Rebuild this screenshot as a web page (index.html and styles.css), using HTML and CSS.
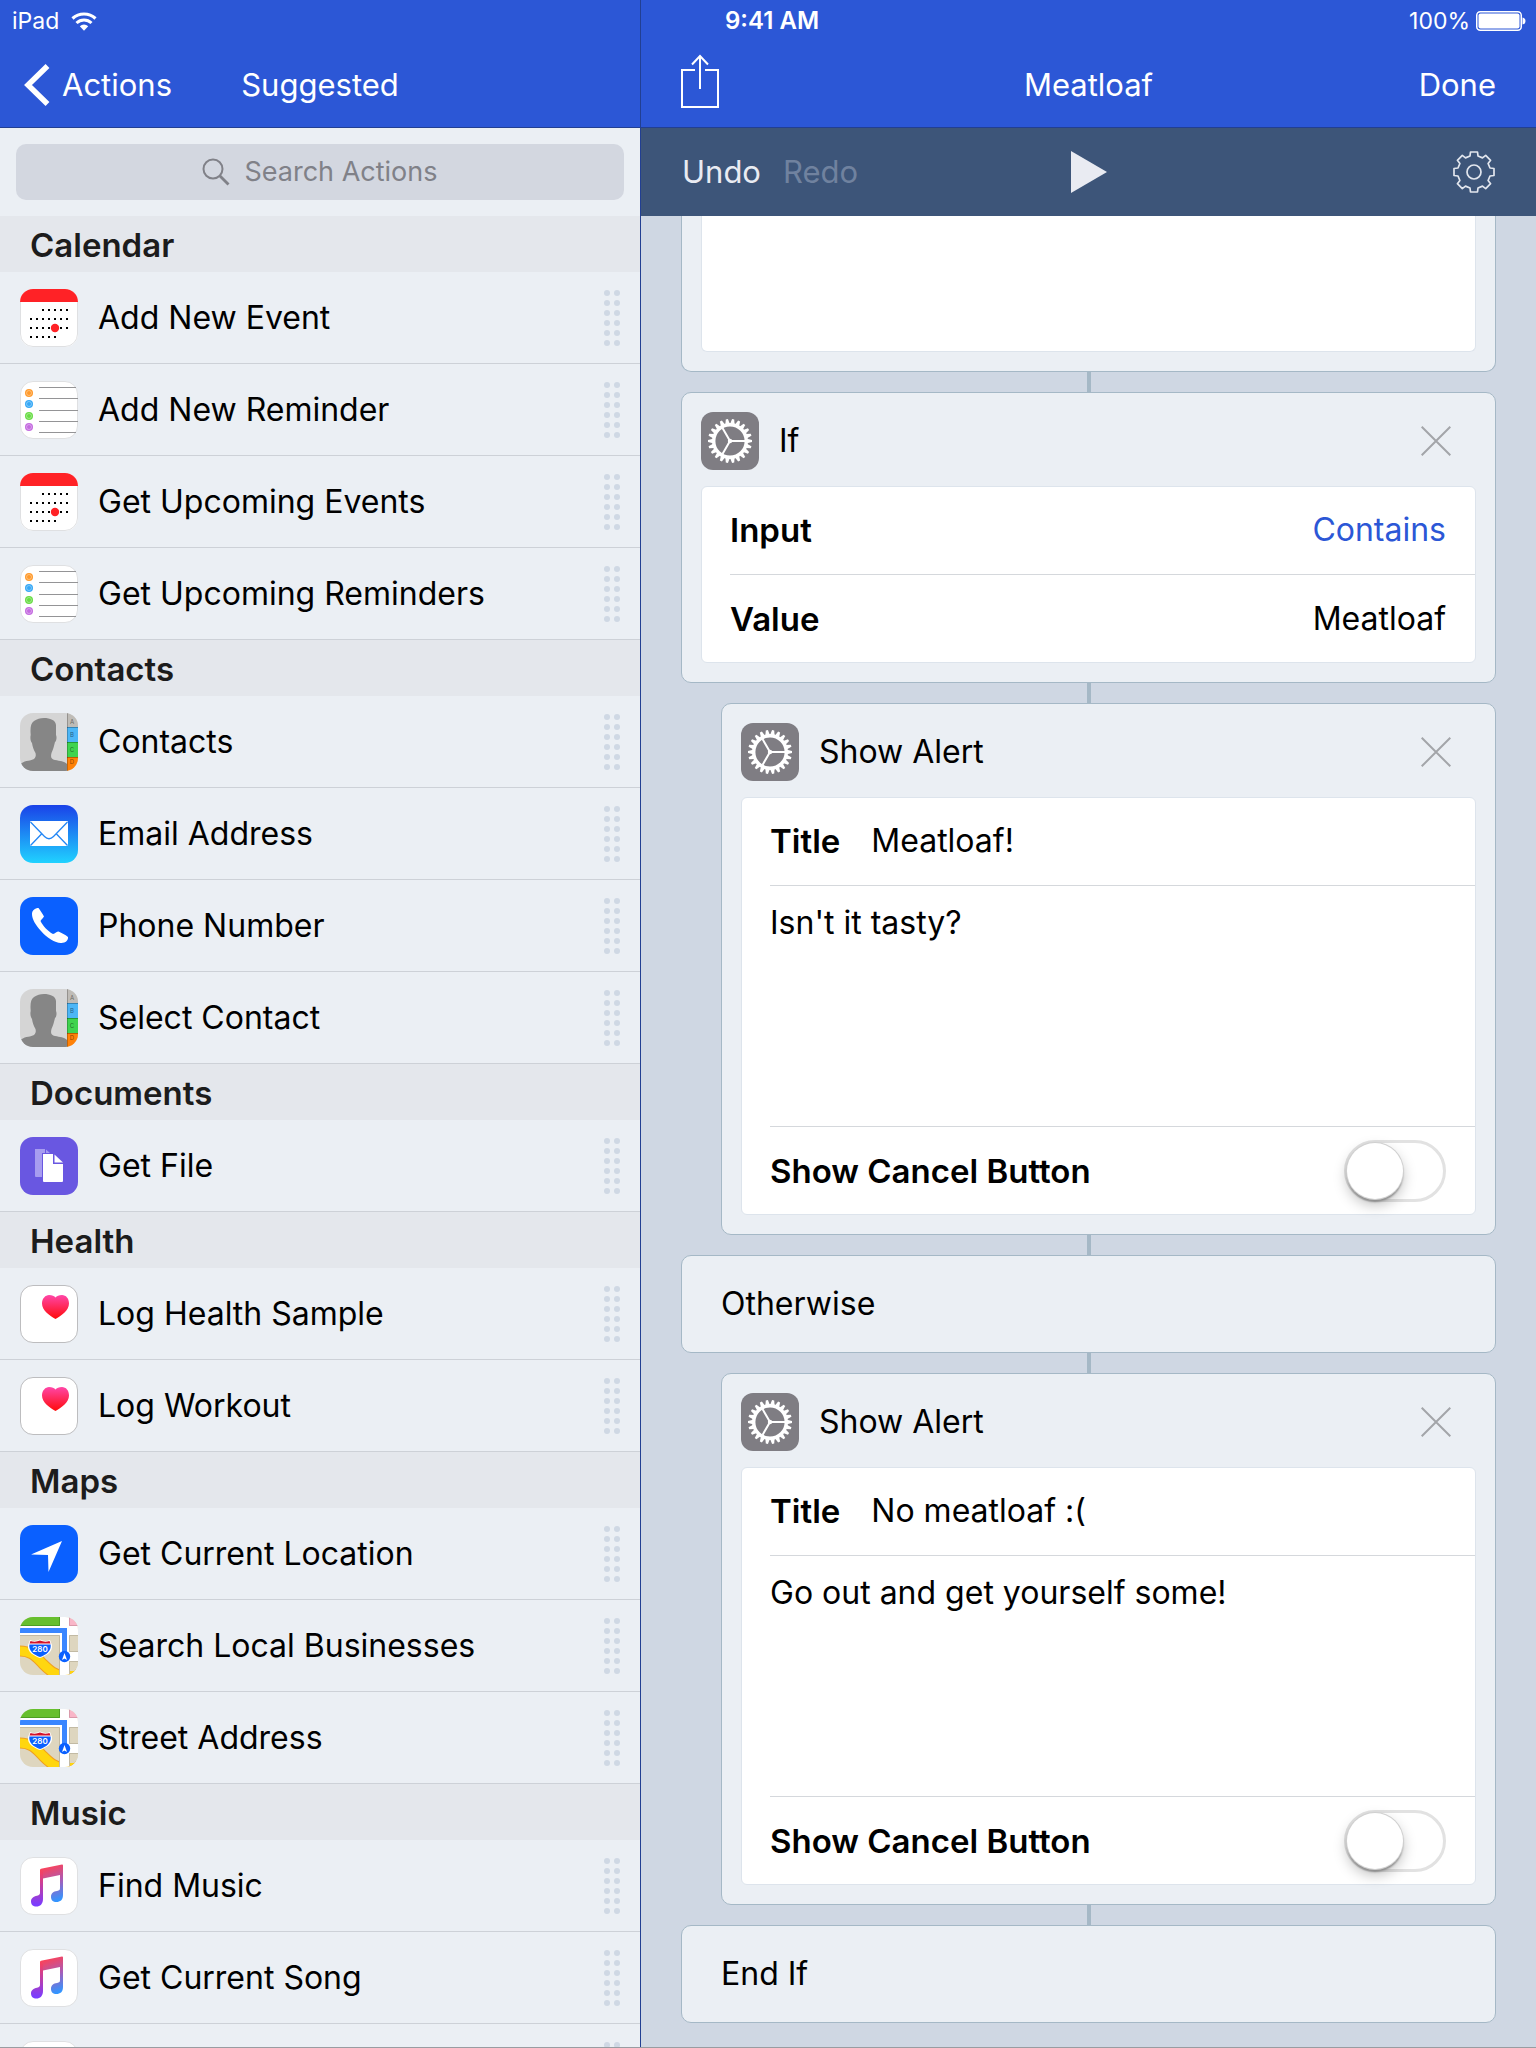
FILE: index.html
```html
<!DOCTYPE html>
<html lang="en">
<head>
<meta charset="utf-8">
<meta name="viewport" content="width=device-width, initial-scale=1">
<title>Meatloaf</title>
<link rel="stylesheet" href="styles.css">
</head>
<body>
<svg class="sprite" aria-hidden="true">
  <defs>
    <clipPath id="tile"><rect width="58" height="58" rx="13"/></clipPath>
    <linearGradient id="mail-fill" x1="0" y1="0" x2="0" y2="1"><stop offset="0" stop-color="#1a42e8"/><stop offset="1" stop-color="#20d2ff"/></linearGradient>
    <linearGradient id="heart-fill" x1="0" y1="0" x2="0" y2="1"><stop offset="0" stop-color="#ff46a8"/><stop offset="1" stop-color="#ff0a0a"/></linearGradient>
    <linearGradient id="note-fill" gradientUnits="userSpaceOnUse" x1="24" y1="10" x2="36" y2="44"><stop offset="0" stop-color="#ff4155"/><stop offset="0.5" stop-color="#a85cb8"/><stop offset="1" stop-color="#3395ff"/></linearGradient>
    <linearGradient id="note-left" gradientUnits="userSpaceOnUse" x1="20" y1="12" x2="18" y2="48"><stop offset="0" stop-color="#ff4155"/><stop offset="1" stop-color="#7a3cff"/></linearGradient>
    <path id="tooth" d="M17 -2.2L22 -1.1V1.1L17 2.2Z"/>
    <g id="half-teeth">
      <use href="#tooth"/><use href="#tooth" transform="rotate(16.364)"/><use href="#tooth" transform="rotate(32.727)"/><use href="#tooth" transform="rotate(49.091)"/><use href="#tooth" transform="rotate(65.455)"/><use href="#tooth" transform="rotate(81.818)"/><use href="#tooth" transform="rotate(98.182)"/><use href="#tooth" transform="rotate(114.545)"/><use href="#tooth" transform="rotate(130.909)"/><use href="#tooth" transform="rotate(147.273)"/><use href="#tooth" transform="rotate(163.636)"/>
    </g>
  </defs>
  <symbol id="i-calendar" viewBox="0 0 58 58">
    <g clip-path="url(#tile)">
      <rect width="58" height="58" fill="#fff"/><rect width="58" height="13" fill="#ff2226"/>
      <g stroke="#000" stroke-width="2" stroke-dasharray="2 4">
        <path d="M22 21H48M10 30H48M10 39H48M10 48H36"/>
      </g>
      <rect x="31" y="37" width="8" height="4" fill="#fff"/><circle cx="35" cy="39" r="4.2" fill="#ff2226"/>
    </g>
    <path d="M.5 13V45A12.500 12.500 0 0 0 13 57.500H45A12.500 12.500 0 0 0 57.500 45V13" fill="none" stroke="#dfe0e2"/>
  </symbol>
  <symbol id="i-reminders" viewBox="0 0 58 58">
    <rect x=".5" y=".5" width="57" height="57" rx="12.500" fill="#fff" stroke="#dfe0e2"/>
    <path d="M19 6.500H56M19 17.500H58M19 29.500H58M19 40.500H58M19 51.500H56" stroke="#949496"/>
    <circle cx="9" cy="12" r="4" fill="#ff9a2b"/><circle cx="9" cy="23" r="4" fill="#36a8f6"/><circle cx="9" cy="35" r="4" fill="#68dc45"/><circle cx="9" cy="46" r="4" fill="#c46be0"/>
    <g fill="none" stroke="#fff" stroke-opacity=".35"><circle cx="9" cy="12" r="2.500"/><circle cx="9" cy="23" r="2.500"/><circle cx="9" cy="35" r="2.500"/><circle cx="9" cy="46" r="2.500"/></g>
  </symbol>
  <symbol id="i-contacts" viewBox="0 0 58 58">
    <g clip-path="url(#tile)">
      <rect width="58" height="58" fill="#d5d5d5"/>
      <path d="M24 5C30 5 35.500 7 36 12V22C37 24 36.500 28 35 29C34 33 33 37 31.500 40C30.500 44 31 46 35 47C40 48 44 48 47 51V58H6C3 56 2 53 1 50.500C6 47 11 48 14 46C16 44 16 42 15.500 40C13.500 37 12.500 33 12 30C10.500 28 10 25 10.700 22C10 14 11 10 14 8C17 6 20 5 24 5Z" fill="#868686"/>
      <rect x="47" width="11" height="14" fill="#bfbcb7"/><rect x="47" y="14" width="11" height="15" fill="#4db6f6"/><rect x="47" y="29" width="11" height="15" fill="#3fd34f"/><rect x="47" y="44" width="11" height="14" fill="#ff8208"/>
      <path d="M47 14.500H58" stroke="#3585b5"/><path d="M47 29.500H58" stroke="#259a35"/><path d="M47 44.500H58" stroke="#bd5c00"/><path d="M47.500 0V58" stroke="#000" stroke-opacity=".22"/>
    </g>
  </symbol>
  <symbol id="i-mail" viewBox="0 0 58 58">
    <rect width="58" height="58" rx="13" fill="url(#mail-fill)"/><rect x="10" y="16" width="38" height="25" rx="1" fill="#fff"/>
    <path d="M10.500 17L24.500 31.500Q29 36 33.500 31.500L47.500 17M10.500 40.500L21.500 29M47.500 40.500L36.500 29" fill="none" stroke="#2286f5" stroke-width="1.300"/>
  </symbol>
  <symbol id="i-phone" viewBox="0 0 58 58">
    <rect width="58" height="58" rx="13" fill="#0a60ff"/>
    <path d="M12 17C12 13.500 15 11 18.500 11C20 13 22.500 16.500 24 19.500C23 21.500 21 22.500 20.500 24C23 29 28 34.500 33 37C35 36.500 37 34.500 38.500 34.500C42 36 45 37.500 48 40C48.500 43 45.500 46 41.500 46C36 46.500 27 41 21 34C15.500 28 12 22 12 17Z" fill="#fff"/>
  </symbol>
  <symbol id="i-file" viewBox="0 0 58 58">
    <rect width="58" height="58" rx="13" fill="#6957e1"/>
    <path d="M15 12H25V16H22V40H16Q15 40 15 39ZM26 12.500L30 16H26Z" fill="#a79cf0"/>
    <path d="M23 17H33V27H43V44Q43 45 42 45H24Q23 45 23 44ZM34.500 17.500L43 25.500H34.500Z" fill="#fff"/>
  </symbol>
  <symbol id="i-health" viewBox="0 0 58 58">
    <rect x=".5" y=".5" width="57" height="57" rx="12.500" fill="#fff" stroke="#bdbdbf"/>
    <path d="M35.500 34C30 31 22 25.500 22 18.500C22 13.500 25.500 10 29 10C32 10 34.500 11 35.500 12.500C36.500 11 39 10 42 10C46 10 49 13.500 49 18.500C49 25.500 41 31 35.500 34Z" fill="url(#heart-fill)"/>
  </symbol>
  <symbol id="i-location" viewBox="0 0 58 58">
    <rect width="58" height="58" rx="13" fill="#0a60ff"/><path d="M42 16L28.500 47L28 30L11 29.500Z" fill="#fff"/>
  </symbol>
  <symbol id="i-maps" viewBox="0 0 58 58">
    <g clip-path="url(#tile)">
      <rect width="58" height="58" fill="#ded6bf"/>
      <path d="M-3 34C12 33 17 41 23 47S34 58 46 60M47 60Q52 58 60 57" fill="none" stroke="#f0a020" stroke-width="11"/>
      <path d="M-3 34C12 33 17 41 23 47S34 58 46 60M47 60Q52 58 60 57" fill="none" stroke="#ffd60f" stroke-width="9"/>
      <path d="M49 45H58V54H49Z" fill="#ded6bf"/>
      <rect width="40" height="9" fill="#67bf2e"/><path d="M0 8.500H39.500V0" fill="none" stroke="#4d9e22"/>
      <rect x="49" width="9" height="9" fill="#f9b6c8"/><path d="M49.500 0V8.500H58" fill="none" stroke="#d99aaa"/>
      <path d="M40 0H49V9H58V18H49V35H58V44H49V58H40V18H0V9H40Z" fill="#fff"/>
      <path d="M0 18.500H39.500V58M58 18.500H49.500V34.500H58M58 44.500H49.500V58" fill="none" stroke="#c2baa4"/>
      <path d="M0 13.500H44.500V38" fill="none" stroke="#3a86ff" stroke-width="5"/>
      <circle cx="44.500" cy="39.500" r="5.700" fill="#0a60ff"/><path d="M44.500 36L47 43L44.500 41.500L42 43Z" fill="#fff"/>
      <path d="M10 23Q15 25 20 22.500Q25 25 30 23L32 28C33 35 26 39 20 41C14 39 7 35 8 28Z" fill="#fff"/>
      <path d="M10.500 24Q15.500 25.500 20 23.500Q24.500 25.500 29.500 24L30.500 26.500H9.500Z" fill="#d3142c"/>
      <path d="M9.300 27.500H30.700C31.500 34 26 38 20 40C14 38 8.500 34 9.300 27.500Z" fill="#0a60ff"/>
    </g>
  </symbol>
  <symbol id="i-music" viewBox="0 0 58 58">
    <rect x=".5" y=".5" width="57" height="57" rx="12.500" fill="#fff" stroke="#dfe0e2"/>
    <path d="M20 13Q20 12 21 11.800L42 7.500Q43 7.400 43 8.500V38C43 43 40 45 36.500 45C33 45 31 43 31 40C31 36 33.500 34.500 37 34C39.500 33.500 40 33 40 31V18L23 21.500V30H20Z" fill="url(#note-fill)"/>
    <path d="M20 13L23 15V42C23 47 20 49.500 16.500 49.500C13 49.500 11 47.500 11 44.500C11 41 13.500 39.500 17 38.700C19.500 38 20 37.500 20 35.500Z" fill="url(#note-left)"/>
  </symbol>
  <symbol id="i-settings" viewBox="0 0 58 58">
    <rect width="58" height="58" rx="12" fill="#7f7d83"/>
    <g transform="translate(29 29)" fill="#fff">
      <use href="#half-teeth"/><use href="#half-teeth" transform="rotate(180)"/>
      <circle r="16.300" fill="none" stroke="#fff" stroke-width="3.400"/>
      <path d="M0 0H15M0 0L-7.500 -13M0 0L-7.500 13" stroke="#fff" stroke-width="2"/><circle r="2.200"/>
    </g>
  </symbol>
  <symbol id="i-grip" viewBox="0 0 16 56">
    <g fill="#cfd8e4"><circle cx="3" cy="3" r="3"/><circle cx="13" cy="3" r="3"/><circle cx="3" cy="13" r="3"/><circle cx="13" cy="13" r="3"/><circle cx="3" cy="23" r="3"/><circle cx="13" cy="23" r="3"/><circle cx="3" cy="33" r="3"/><circle cx="13" cy="33" r="3"/><circle cx="3" cy="43" r="3"/><circle cx="13" cy="43" r="3"/><circle cx="3" cy="53" r="3"/><circle cx="13" cy="53" r="3"/></g>
  </symbol>
  <symbol id="i-close" viewBox="0 0 30 30"><path d="M.7 .7L29.300 29.300M29.300 .7L.7 29.300" stroke="#a3a5a9" stroke-width="2"/></symbol>
</svg>

<div class="app">
  <aside class="sidebar">
    <header class="bar">
      <div class="status">
        <span>iPad</span>
        <svg class="wifi" viewBox="0 0 26 19" aria-label="Wi-Fi"><path d="M1.500 6.500A17 17 0 0 1 24.500 6.500" fill="none" stroke="#fff" stroke-width="3.200"/><path d="M5.500 11A11 11 0 0 1 20.500 11" fill="none" stroke="#fff" stroke-width="3"/><path d="M8.800 14.200A6.300 6.300 0 0 1 17.200 14.200L13 18.800Z" fill="#fff"/></svg>
      </div>
      <nav class="nav">
        <button class="nav-button back" type="button"><svg class="chevron" viewBox="0 0 26 42" aria-hidden="true"><path d="M23.500 2L4 21L23.500 40" fill="none" stroke="#fff" stroke-width="5.500"/></svg>Actions</button>
        <h1 class="nav-title">Suggested</h1>
      </nav>
    </header>
    <div class="search">
      <label class="search-field">
        <svg class="glass" viewBox="0 0 28 28" aria-hidden="true"><circle cx="11" cy="11" r="9.500" fill="none" stroke="#808188" stroke-width="2"/><path d="M17.500 17.500L26.500 26.500" stroke="#808188" stroke-width="2.800"/></svg>
        <input type="text" placeholder="Search Actions" aria-label="Search Actions">
      </label>
    </div>
    <div class="catalog">
      <h2>Calendar</h2>
      <ul>
        <li><button type="button"><svg class="tile"><use href="#i-calendar"/></svg><span>Add New Event</span><svg class="grip"><use href="#i-grip"/></svg></button></li>
        <li><button type="button"><svg class="tile"><use href="#i-reminders"/></svg><span>Add New Reminder</span><svg class="grip"><use href="#i-grip"/></svg></button></li>
        <li><button type="button"><svg class="tile"><use href="#i-calendar"/></svg><span>Get Upcoming Events</span><svg class="grip"><use href="#i-grip"/></svg></button></li>
        <li><button type="button"><svg class="tile"><use href="#i-reminders"/></svg><span>Get Upcoming Reminders</span><svg class="grip"><use href="#i-grip"/></svg></button></li>
      </ul>
      <h2>Contacts</h2>
      <ul>
        <li><button type="button"><svg class="tile"><use href="#i-contacts"/><g class="tab-letter" aria-hidden="true"><text x="52" y="11">A</text><text x="52" y="24">B</text><text x="52" y="39">C</text><text x="52" y="51">D</text></g></svg><span>Contacts</span><svg class="grip"><use href="#i-grip"/></svg></button></li>
        <li><button type="button"><svg class="tile"><use href="#i-mail"/></svg><span>Email Address</span><svg class="grip"><use href="#i-grip"/></svg></button></li>
        <li><button type="button"><svg class="tile"><use href="#i-phone"/></svg><span>Phone Number</span><svg class="grip"><use href="#i-grip"/></svg></button></li>
        <li><button type="button"><svg class="tile"><use href="#i-contacts"/><g class="tab-letter" aria-hidden="true"><text x="52" y="11">A</text><text x="52" y="24">B</text><text x="52" y="39">C</text><text x="52" y="51">D</text></g></svg><span>Select Contact</span><svg class="grip"><use href="#i-grip"/></svg></button></li>
      </ul>
      <h2>Documents</h2>
      <ul>
        <li><button type="button"><svg class="tile"><use href="#i-file"/></svg><span>Get File</span><svg class="grip"><use href="#i-grip"/></svg></button></li>
      </ul>
      <h2>Health</h2>
      <ul>
        <li><button type="button"><svg class="tile"><use href="#i-health"/></svg><span>Log Health Sample</span><svg class="grip"><use href="#i-grip"/></svg></button></li>
        <li><button type="button"><svg class="tile"><use href="#i-health"/></svg><span>Log Workout</span><svg class="grip"><use href="#i-grip"/></svg></button></li>
      </ul>
      <h2>Maps</h2>
      <ul>
        <li><button type="button"><svg class="tile"><use href="#i-location"/></svg><span>Get Current Location</span><svg class="grip"><use href="#i-grip"/></svg></button></li>
        <li><button type="button"><svg class="tile"><use href="#i-maps"/><text class="route" x="20" y="35" aria-hidden="true">280</text></svg><span>Search Local Businesses</span><svg class="grip"><use href="#i-grip"/></svg></button></li>
        <li><button type="button"><svg class="tile"><use href="#i-maps"/><text class="route" x="20" y="35" aria-hidden="true">280</text></svg><span>Street Address</span><svg class="grip"><use href="#i-grip"/></svg></button></li>
      </ul>
      <h2>Music</h2>
      <ul>
        <li><button type="button"><svg class="tile"><use href="#i-music"/></svg><span>Find Music</span><svg class="grip"><use href="#i-grip"/></svg></button></li>
        <li><button type="button"><svg class="tile"><use href="#i-music"/></svg><span>Get Current Song</span><svg class="grip"><use href="#i-grip"/></svg></button></li>
        <li><button type="button" aria-label="Music action"><svg class="tile"><use href="#i-music"/></svg><span></span><svg class="grip"><use href="#i-grip"/></svg></button></li>
      </ul>
    </div>
  </aside>

  <main class="editor">
    <header class="bar">
      <div class="status status-main">
        <time class="clock">9:41 AM</time>
        <span class="power">100%<svg class="battery" viewBox="0 0 50 20" aria-hidden="true"><rect x=".75" y=".75" width="44.500" height="18.500" rx="3.500" fill="none" stroke="#fff" stroke-width="1.500"/><rect x="2.500" y="2.500" width="41" height="15" rx="2" fill="#fff"/><path d="M46.500 6.500Q49.500 7 49.500 10T46.500 13.500Z" fill="#fff"/></svg></span>
      </div>
      <nav class="nav nav-main">
        <button class="nav-button" type="button" aria-label="Share"><svg class="share" viewBox="0 0 38 54"><path d="M14 16H1V53H37V16H24M19 35V2M11 10.500L19 2L27 10.500" fill="none" stroke="#fff" stroke-width="2"/></svg></button>
        <h1 class="nav-title">Meatloaf</h1>
        <button class="nav-button done" type="button">Done</button>
      </nav>
    </header>
    <div class="toolbar">
      <div class="history"><button type="button">Undo</button><button type="button" disabled>Redo</button></div>
      <button type="button" aria-label="Run"><svg class="play" viewBox="0 0 36 42"><path d="M0 0L36 21L0 42Z" fill="#e9ebf2"/></svg></button>
      <button class="options" type="button" aria-label="Settings"><svg class="cog" viewBox="-21 -21 42 42"><path d="M-3.500 -20H3.500L4 -16L8.500 -14.100L11.700 -16.600L16.600 -11.700L14.100 -8.500L16 -4L20 -3.500V3.500L16 4L14.100 8.500L16.600 11.700L11.700 16.600L8.500 14.100L4 16L3.500 20H-3.500L-4 16L-8.500 14.100L-11.700 16.600L-16.600 11.700L-14.100 8.500L-16 4L-20 3.500V-3.500L-16 -4L-14.100 -8.500L-16.600 -11.700L-11.700 -16.600L-8.500 -14.100L-4 -16Z" fill="none" stroke="#e2e6ee" stroke-width="1.700" stroke-linejoin="round"/><circle r="7" fill="none" stroke="#e2e6ee" stroke-width="1.700"/></svg></button>
    </div>

    <div class="flow">
      <section class="card card-cut"><div class="panel"><textarea class="short" aria-label="Text"></textarea></div></section>

      <section class="card">
        <header class="card-head"><svg class="tile"><use href="#i-settings"/></svg><h2>If</h2><button type="button" aria-label="Remove If"><svg class="close"><use href="#i-close"/></svg></button></header>
        <div class="panel">
          <div class="field"><b>Input</b><button class="choice" type="button">Contains</button></div>
          <div class="field"><label for="value">Value</label><input class="end" id="value" value="Meatloaf"></div>
        </div>
      </section>

      <section class="card nested">
        <header class="card-head"><svg class="tile"><use href="#i-settings"/></svg><h2>Show Alert</h2><button type="button" aria-label="Remove Show Alert"><svg class="close"><use href="#i-close"/></svg></button></header>
        <div class="panel">
          <div class="field"><label for="title-1">Title</label><input id="title-1" value="Meatloaf!"></div>
          <div class="message"><textarea aria-label="Message">Isn't it tasty?</textarea></div>
          <div class="field"><label for="cancel-1">Show Cancel Button</label><input class="switch" id="cancel-1" type="checkbox"></div>
        </div>
      </section>

      <section class="card branch"><h2>Otherwise</h2></section>

      <section class="card nested">
        <header class="card-head"><svg class="tile"><use href="#i-settings"/></svg><h2>Show Alert</h2><button type="button" aria-label="Remove Show Alert"><svg class="close"><use href="#i-close"/></svg></button></header>
        <div class="panel">
          <div class="field"><label for="title-2">Title</label><input id="title-2" value="No meatloaf :("></div>
          <div class="message"><textarea aria-label="Message">Go out and get yourself some!</textarea></div>
          <div class="field"><label for="cancel-2">Show Cancel Button</label><input class="switch" id="cancel-2" type="checkbox"></div>
        </div>
      </section>

      <section class="card branch"><h2>End If</h2></section>
    </div>
  </main>
</div>
</body>
</html>
```

FILE: styles.css
```css
* { box-sizing: border-box; }

body {
  margin: 0;
  font: 400 32px/40px Inter, "Liberation Sans", sans-serif;
  color: #000;
  background: #cfd7e3;
}

h1, h2, ul { margin: 0; padding: 0; font-size: inherit; font-weight: 400; }
ul { list-style: none; }
svg { display: block; flex: none; }

button, input, textarea {
  margin: 0;
  padding: 0;
  border: 0;
  background: none;
  font: inherit;
  color: inherit;
  outline: 0;
}

.sprite { position: absolute; width: 0; height: 0; }
.tab-letter { font-size: 6px; text-anchor: middle; fill: #000; fill-opacity: .5; }
.route { font-size: 8px; font-weight: 600; text-anchor: middle; fill: #fff; }

.app {
  display: grid;
  grid-template-columns: 641fr 895fr;
  height: 100vh;
  overflow: hidden;
  border-bottom: 1px solid #999ca1;
}

/* Blue bars */
.bar {
  background: #2c57d6;
  border-bottom: 1px solid #223f92;
  color: #fff;
}

.status {
  display: flex;
  align-items: center;
  gap: 12px;
  height: 42px;
  padding: 0 10px 0 12px;
  font-size: 23px;
}
.status-main { justify-content: space-between; padding-left: 84px; }
.wifi { width: 26px; height: 19px; }
.clock { font-size: 24px; font-weight: 600; }
.power { display: flex; align-items: center; gap: 6px; }
.battery { width: 50px; height: 20px; }

.nav {
  display: grid;
  grid-template-columns: 1fr auto 1fr;
  align-items: center;
  height: 85px;
  padding: 0 24px;
  font-size: 31px;
}
.nav-main { padding: 0 40px; }
.nav-title { grid-column: 2; }
.nav-button { justify-self: start; }
.back { display: flex; align-items: center; gap: 12px; }
.done { justify-self: end; }
.chevron { width: 26px; height: 42px; }
.share { width: 38px; height: 54px; margin-bottom: 8px; }

/* Action library */
.sidebar {
  display: flex;
  flex-direction: column;
  min-width: 0;
  min-height: 0;
  background: #ebeff4;
  border-right: 1px solid #223f92;
}

.search { padding: 16px; }
.search-field {
  display: flex;
  align-items: center;
  justify-content: center;
  gap: 14px;
  height: 56px;
  border-radius: 10px;
  background: #d3d7e0;
  font-size: 27px;
}
.search-field input { field-sizing: content; }
.search-field ::placeholder { color: #808188; opacity: 1; }
.glass { width: 28px; height: 28px; }

.catalog { flex: 1; min-height: 0; overflow: hidden; }
.catalog h2 {
  height: 56px;
  padding: 9px 30px;
  background: #e4e7ec;
  color: #1c1c1c;
  font-size: 33px;
  font-weight: 600;
}
.catalog li { border-bottom: 1px solid #cdd1d7; }
.catalog button {
  display: flex;
  align-items: center;
  gap: 20px;
  width: 100%;
  height: 91px;
  padding: 0 20px;
  text-align: left;
}
.catalog span { flex: 1; }
.tile { width: 58px; height: 58px; }
.grip { width: 16px; height: 56px; }

/* Workflow editor */
.editor {
  display: flex;
  flex-direction: column;
  min-width: 0;
  min-height: 0;
}

.toolbar {
  display: grid;
  grid-template-columns: 1fr auto 1fr;
  align-items: center;
  height: 88px;
  padding: 0 41px;
  background: #3d5579;
  color: #e9ebf2;
  font-size: 31px;
}
.history { display: flex; gap: 22px; }
.history :disabled { color: #70829f; }
.options { justify-self: end; }
.play { width: 36px; height: 42px; }
.cog { width: 42px; height: 42px; }

.flow { flex: 1; min-height: 0; padding: 0 40px; overflow: hidden; }

.card {
  position: relative;
  margin-bottom: 20px;
  padding: 0 19px 19px;
  border: 1px solid #a5b8c6;
  border-radius: 10px;
  background: #ebeff4;
}
.nested { margin-left: 40px; }

/* Connector down to the next step, centred on the whole flow */
.card:not(:last-child)::after {
  content: "";
  position: absolute;
  top: calc(100% + 1px);
  left: calc(50% - 2px);
  width: 4px;
  height: 20px;
  background: #a5b8c6;
}
.nested:not(:last-child)::after { left: calc(50% - 22px); }

.card-head {
  display: flex;
  align-items: center;
  gap: 20px;
  height: 93px;
  padding: 2px 25px 0 0;
}
.card-head h2 { flex: 1; }
.close { width: 30px; height: 30px; }

.panel {
  padding-left: 28px;
  border: 1px solid #dde4ec;
  border-radius: 6px;
  background: #fff;
}
.panel > * + * { border-top: 1px solid #d5d8dc; }

.card-cut, .card-cut .panel {
  border-top: 0;
  border-top-left-radius: 0;
  border-top-right-radius: 0;
}

.field {
  display: flex;
  align-items: center;
  justify-content: space-between;
  gap: 31px;
  min-height: 88px;
  padding-right: 29px;
}
.field:first-child { min-height: 87px; padding-bottom: 2px; }
.field label, .field b { font-size: 33px; font-weight: 600; }
.field input { flex: 1; min-width: 0; }
.field .end { text-align: right; }
.choice { color: #2c57d6; }

textarea {
  display: block;
  width: 100%;
  height: 240px;
  padding: 17px 29px 0 0;
  resize: none;
}
.short { height: 135px; }

.field .switch {
  flex: none;
  appearance: none;
  width: 102px;
  height: 62px;
  border: 3px solid #e2e2e2;
  border-radius: 31px;
}
.switch::before {
  content: "";
  display: block;
  width: 56px;
  height: 56px;
  border-radius: 50%;
  background: #fff;
  box-shadow: 0 0 0 1px #d0d0d0, 0 3px 2px #8c8c8c, 0 6px 14px rgba(0, 0, 0, .25);
}
.switch:checked { background: #4cd964; border-color: #4cd964; }
.switch:checked::before { margin-left: 40px; }

.branch { height: 98px; padding: 28px 39px; }
```
